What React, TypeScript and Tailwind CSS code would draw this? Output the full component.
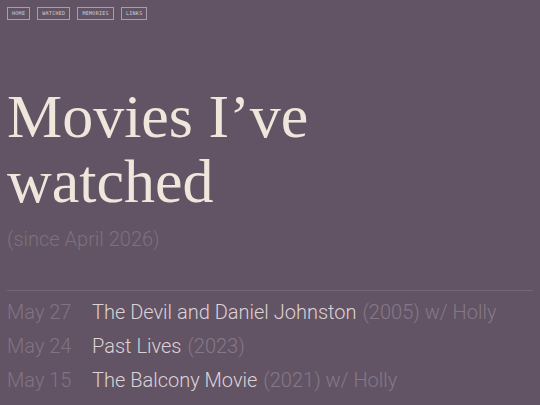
const movies = [
  { date: 'May 27', title: 'The Devil and Daniel Johnston', year: '2005', with: 'Holly' },
  { date: 'May 24', title: 'Past Lives', year: '2023', with: '' },
  { date: 'May 15', title: 'The Balcony Movie', year: '2021', with: 'Holly' },
];

const nav = ['Home', 'Watched', 'Memories', 'Links'];

export default function App() {
  return (
    <div className="min-h-[405px] w-full overflow-hidden bg-[#625464] px-[7px] pt-[7px] font-['Roboto','Liberation_Sans',sans-serif]">
      {/* nav */}
      <div className="flex gap-[7px]">
        {nav.map(n => (
          <a
            key={n}
            className="flex h-[13px] items-center border border-[#a89ea9] px-[4px] font-['DejaVu_Sans_Mono',monospace] text-[5px] uppercase leading-none tracking-[0.06em] text-[#d8cfd6]"
          >
            {n}
          </a>
        ))}
      </div>

      {/* heading */}
      <h1 className="mt-[64px] max-w-[420px] font-['Liberation_Serif',serif] text-[62px] font-normal leading-[65px] text-[#efe6dc]">
        Movies I’ve watched
      </h1>
      <div className="mt-[10px] text-[20px] font-light text-[#7e7081]">(since April 2026)</div>

      {/* list */}
      <div className="mt-[36px] border-t border-[#74667a] pt-[4px]">
        {movies.map(m => (
          <div key={m.date} className="flex h-[34px] items-center text-[20px] font-light">
            <span className="w-[85px] text-[#817384]">{m.date}</span>
            <span className="text-[#ddd2d6]">{m.title}</span>
            <span className="ml-[6px] text-[#867889]">
              ({m.year}){m.with ? ` w/ ${m.with}` : ''}
            </span>
          </div>
        ))}
      </div>
    </div>
  );
}
